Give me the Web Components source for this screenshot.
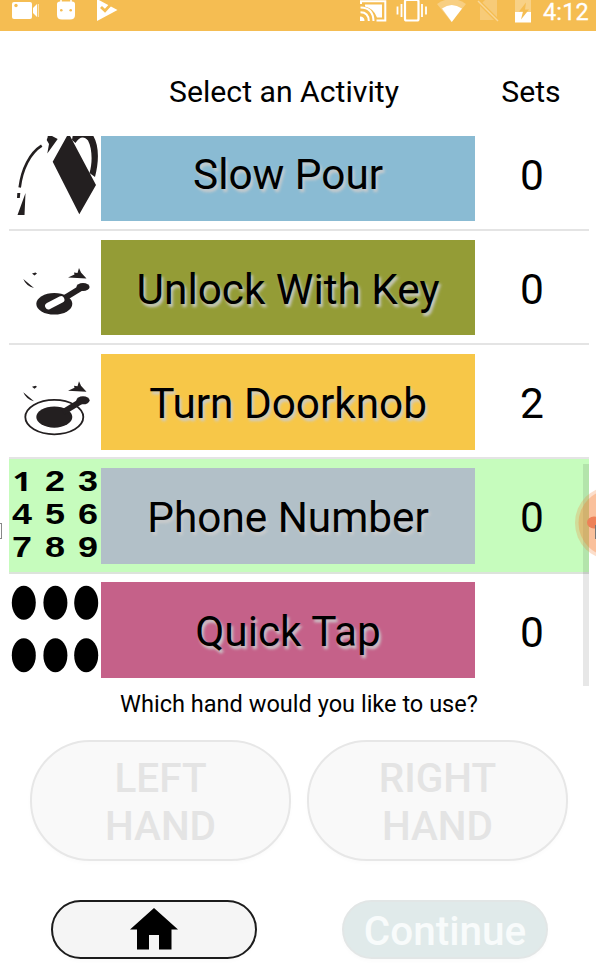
<!DOCTYPE html>
<html lang="en"><head><meta charset="utf-8"><title>Select an Activity</title>
<style>html,body{margin:0;height:100%;overflow:hidden;background:#fff;font-family:Roboto,"Open Sans",sans-serif;color:#000}</style></head>
<body><activity-app></activity-app>
<script>
const define=(name,html,setup)=>customElements.define(name,class extends HTMLElement{
 connectedCallback(){if(this.shadowRoot)return;const t=document.createElement('template');t.innerHTML=html;this.attachShadow({mode:'open'}).append(t.content.cloneNode(true));if(setup)setup(this,this.shadowRoot);}
});
define('status-bar',`<style>
:host{display:flex;height:30.5px;background:#f5bd52;color:#fff;justify-content:space-between;align-items:flex-start}
svg{display:block;flex:none}
.time{font-size:23.500px;line-height:24px;font-weight:400;-webkit-text-stroke:.3px #fff;padding:0 7px 0 0;letter-spacing:.2px}
.right{display:flex}
</style>
<svg width="130" height="30" fill="#fff"><rect x="12" y="2" width="20" height="17" rx="2"/><circle cx="16" cy="5.5" r="1.7" fill="#f5bd52"/><path d="M33 8l4-4v13l-4-4z"/><path d="M38.3 4v13" stroke="#fff" stroke-width="1" opacity=".7"/>
<path d="M57 4q0-2.500 3-2.500h12q3 0 3 2.500v11q0 4.500-5 4.500h-8q-5 0-5-4.500z"/><path d="M61-2v4M71-2v4" stroke="#fff" stroke-width="1.500"/><circle cx="61.300" cy="10.300" r="1.300" fill="#f5bd52"/><circle cx="70.700" cy="10.300" r="1.300" fill="#f5bd52"/>
<path d="M97-1L117.500 10 97 21z"/><path d="M101 7l4 3.800 10-11" fill="none" stroke="#f5bd52" stroke-width="2.800"/></svg>
<div class="right"><svg width="186" height="30" viewBox="357 0 186 30" fill="none" stroke="#fff"><path d="M361 4V1.200h24.300v19.300H376.500" stroke-width="2"/><path d="M365 4.500h17v13h-5q-3-9-12-11z" fill="#fff" stroke="none"/><path d="M360.500 7.500q12.500 0 13 13.500M360.500 12.300q8 0 8.300 8.700" stroke-width="2"/><path d="M360 16.500q4.500 0 4.500 4.500H360z" fill="#fff" stroke="none"/>
<rect x="405" y="0" width="13.500" height="20.500" rx="1.500" stroke-width="2.200"/><path d="M401.500 4v13M422 4v13M397.500 6.500v8M426 6.500v8" stroke-width="1.800"/>
<path d="M437 4Q451.500-6 466 4L451.500 22z" fill="#fff" fill-opacity=".28" stroke="none"/><path d="M442 8.500q9.500-7 20 0L451.800 22z" fill="#fff" stroke="none"/>
<path d="M480 5l6-6h11v21h-17z" fill="#fff" fill-opacity=".22" stroke="none"/><path d="M478 1l20 20" stroke="#f5bd52" stroke-width="4"/><path d="M478 1l20 20" stroke-width="1.500" opacity=".4"/>
<path d="M515 0h16v22h-16z" fill="#fff" fill-opacity=".3" stroke="none"/><path d="M515 12h16v10.500h-16z" fill="#fff" stroke="none"/><path d="M526 2.500l-7 9h4l-2 8 8-10h-4z" fill="#f5bd52" stroke="none"/></svg>
<span class="time">4:12</span></div>`);
const spoon=`<path d="M63 299L81 288" stroke="#231f20" stroke-width="6"/><ellipse cx="83" cy="287" rx="6.600" ry="4"/>`;
const marks=`<path d="M68 277.500l6.500-3-.5-2 3.500.5 1.500-5 2 4.500 5.500 6zM23.300 279l10.700 9q-8-2-10.700-9zM32 273.500l3.500-1 1.500 1-2.500 2z"/>`;
const icons={
pour:`<g fill="#231f20"><path d="M19.700 187.500C22 169 30 153 41.700 145.700" fill="none" stroke="#231f20" stroke-width="2.600"/><path d="M17.300 193h3l-.5 5h-2.800zM25.500 193l-1 22H17.500z"/><path d="M47.700 134v3l-1 3 2.300 4-1.700 9.500L57.700 139 52 136v-2z"/><path d="M66 134h3L96 185 79.300 214.300 52.700 161.700 67 136z"/><path d="M73 134H92C99 143 99.500 160 95 177L89.500 173C92.500 163 92.500 149 88 140.500 84 135.500 79 137 75.500 143L72 140z"/></g>`,
key:`<g fill="#231f20"><ellipse cx="54.300" cy="303.800" rx="18" ry="10.800"/>${spoon}<path d="M48.500 306l12.500-6.500" stroke="#fff" stroke-width="6.800" stroke-linecap="round"/>${marks}</g>`,
knob:`<g fill="#231f20" transform="translate(0 113.300)"><ellipse cx="54.300" cy="303.800" rx="29" ry="17.200" fill="none" stroke="#231f20" stroke-width="1.800"/><ellipse cx="54.300" cy="303.800" rx="18" ry="10.600"/>${spoon}${marks}</g>`,
phone:[1,2,3,4,5,6,7,8,9].map((n,i)=>`<text transform="translate(${22+i%3*33} ${491.200+Math.floor(i/3)*33}) scale(1.24 1)" text-anchor="middle" font-family="${n===1?'Open Sans':'Liberation Sans'}" font-weight="700" font-size="${n===1?27:29}">${n}</text>`).join(''),
tap:[601.800,654.300].map(y=>[23.800,55.400,86.200].map(x=>`<ellipse cx="${x}" cy="${y}" rx="12" ry="17"/>`).join('')).join('')};
define('activity-row',`<style>
:host{display:grid;grid-template-columns:92.300px 373.500px 1fr;height:114.200px;box-sizing:border-box;border-bottom:2px solid #e4e4e4;flex:none}
:host([selected]){background:#c6fcbd;border-color:#dce3db}
svg{display:block;width:92px;height:113px}
.label{margin:8.700px 0 0;height:95.700px;background:var(--tone);display:flex;align-items:center;justify-content:center;font-size:42.300px;line-height:50px;text-shadow:2px 3px 3px #ccc;padding-top:4px;box-sizing:border-box}
.count{display:flex;align-items:center;justify-content:center;font-size:42.500px;padding-top:4px}
</style><svg></svg><div class="label"><slot></slot></div><div class="count"></div>`,(h,s)=>{
 s.host.style.setProperty('--tone',h.getAttribute('tone'));
 s.querySelector('svg').setAttribute('viewBox',`9 ${h.getAttribute('origin')} 92 113`);
 s.querySelector('svg').innerHTML=icons[h.getAttribute('icon')];
 s.querySelector('.count').textContent=h.getAttribute('sets');});
define('activity-list',`<style>:host{display:flex;flex-direction:column;justify-content:flex-end;height:550px;margin:0 7px 0 9px;overflow:hidden;position:relative}
::slotted(activity-row:last-of-type){margin-bottom:-1.800px;border-color:transparent}
.thumb{position:absolute;right:0;bottom:0;width:6px;height:222px;background:#00000018}</style><slot></slot><div class="thumb"></div>`);
define('pill-button',`<style>:host{display:flex;align-items:center;justify-content:center;box-sizing:border-box;border:2px solid #e7e7e7;background:#f9f9f9;color:#e4e4e4;border-radius:60px;width:261px;height:121px;font-size:40.500px;line-height:47.700px;font-weight:500;text-align:center;padding-top:5px;box-shadow:0 2px 4px #00000005}
:host([kind=home]){width:206px;height:59px;border-color:#1c1c1c;background:#f5f5f5;padding:0 0 2px}
:host([kind=next]){width:206px;height:59px;border-color:#e2e6e6;background:#e0eaea;color:#f8fbfb;padding-top:4px}</style><slot></slot>`);
define('activity-app',`<style>
:host{display:flex;flex-direction:column;height:974px;position:relative;overflow:hidden}
header{display:grid;height:105.500px;grid-template-columns:102px 364px 130px;text-align:center;font-size:30.200px;line-height:35px;padding-top:43.500px;box-sizing:border-box}
.question{font-size:23.550px;line-height:28px;text-align:center;margin:3.500px 0 0 2px}
.hands{display:flex;gap:16px;margin:22.500px 0 0 30px}
.actions{display:flex;gap:85px;margin:39px 0 0 51px}
.bubble{position:absolute;left:575px;top:486px;width:74px;height:74px;overflow:hidden}
.cursor{position:absolute;left:-8px;top:523px;width:8px;height:14px;border:1px solid #888;background:#fff}
</style>
<status-bar></status-bar><header><span></span><span>Select an Activity</span><span>Sets</span></header>
<activity-list>
<activity-row icon="pour" origin="117" tone="#8abbd3" sets="0">Slow Pour</activity-row>
<activity-row icon="key" origin="231" tone="#949c36" sets="0">Unlock With Key</activity-row>
<activity-row icon="knob" origin="345" tone="#f7c748" sets="2">Turn Doorknob</activity-row>
<activity-row selected icon="phone" origin="459" tone="#b2c0c8" sets="0">Phone Number</activity-row>
<activity-row icon="tap" origin="573" tone="#c56189" sets="0">Quick Tap</activity-row>
</activity-list>
<div class="question">Which hand would you like to use?</div>
<div class="hands"><pill-button>LEFT<br>HAND</pill-button><pill-button>RIGHT<br>HAND</pill-button></div>
<div class="actions"><pill-button kind="home"><svg width="48" height="42" viewBox="0 0 48 42"><path d="M24 0L48 21.500H41.500V41.500H29V27H19V41.500H7V21.500H0z"/></svg></pill-button><pill-button kind="next">Continue</pill-button></div>
<svg class="bubble" viewBox="575 486 74 74"><circle cx="612" cy="523" r="37" fill="#f47b30" opacity=".25"/><circle cx="612" cy="523" r="33.500" fill="#f47b30" opacity=".3"/><ellipse cx="594" cy="522.500" rx="7" ry="6" fill="#ee8158"/><path d="M595 525h5v14h-5z" fill="#777"/></svg><div class="cursor"></div>`);
</script></body></html>
